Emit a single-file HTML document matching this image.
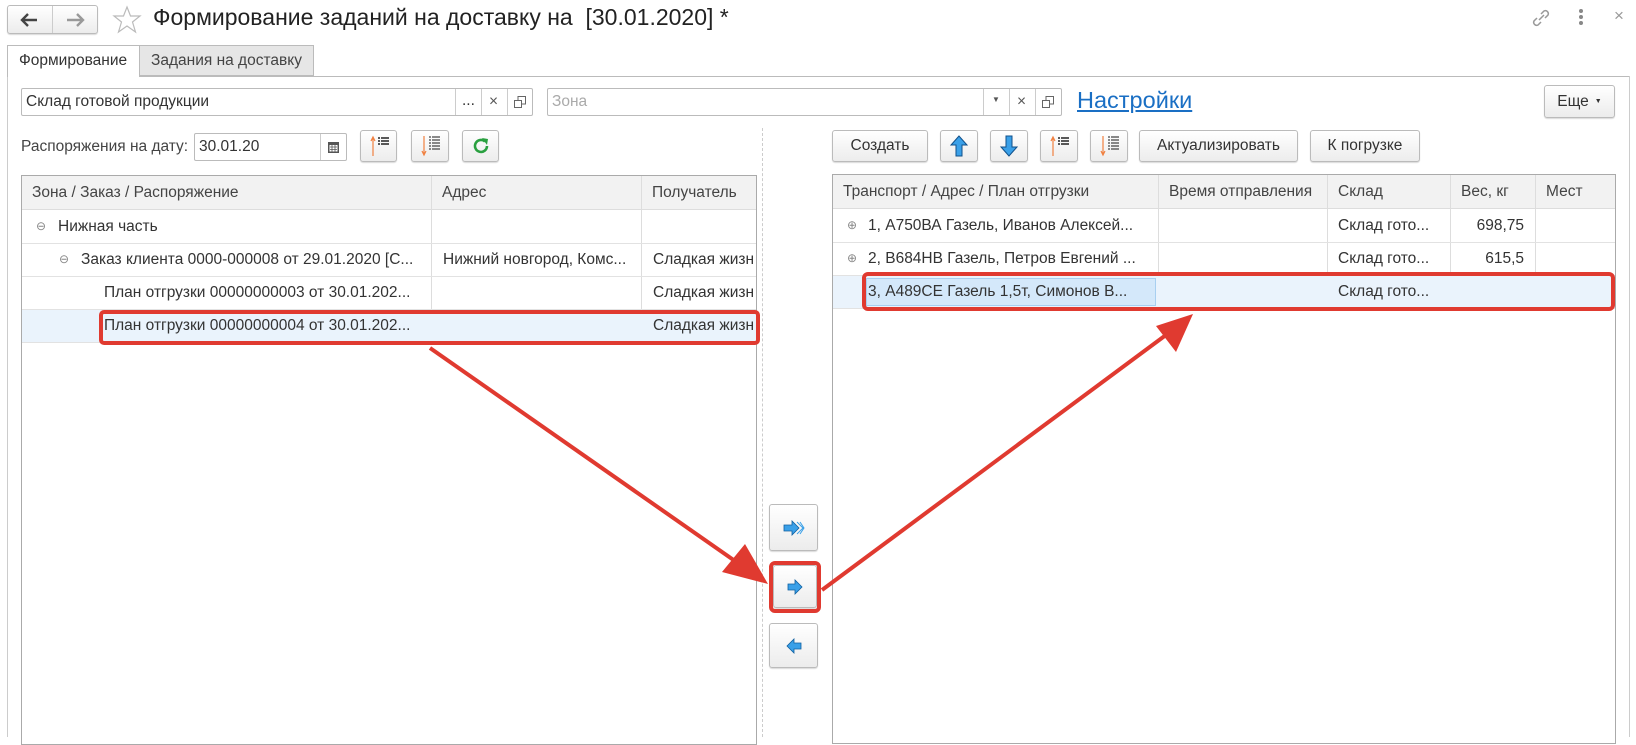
<!DOCTYPE html>
<html><head><meta charset="utf-8">
<style>
*{box-sizing:border-box;margin:0;padding:0}
body{width:1636px;height:737px;background:#fff;font-family:"Liberation Sans",sans-serif;font-size:15.5px;color:#333;position:relative;overflow:hidden}
.a{position:absolute}
.btn{position:absolute;border:1px solid #bbb;border-radius:3px;background:linear-gradient(#fff,#ececec);box-shadow:0 1px 1px rgba(0,0,0,.15);display:flex;align-items:center;justify-content:center;color:#333;font-size:15.5px}
.fld{position:absolute;border:1px solid #bbb;border-radius:2px;background:#fff}
.cell{position:absolute;white-space:nowrap;overflow:hidden;line-height:33px;height:33px}
.hl{position:absolute;height:1px;background:#e2e2e2}
.vl{position:absolute;width:1px;background:#ddd}
</style></head><body>
<!-- nav -->
<div class="btn" style="left:7px;top:5px;width:91px;height:29px;border-radius:3px"></div>
<div class="a" style="left:52px;top:6px;width:1px;height:27px;background:#ccc"></div>
<svg class="a" style="left:20px;top:12px" width="20" height="16"><path d="M2 8h15M8 2L2 8l6 6" stroke="#444" stroke-width="2.4" fill="none"/></svg>
<svg class="a" style="left:65px;top:12px" width="20" height="16"><path d="M2 8h15M12 2l6 6-6 6" stroke="#999" stroke-width="2.4" fill="none"/></svg>
<svg class="a" style="left:112px;top:5px" width="30" height="29"><polygon points="15,2 18.5,11 28,11 20.5,17 23.5,27 15,21 6.5,27 9.5,17 2,11 11.5,11" fill="none" stroke="#bbb" stroke-width="1.2"/></svg>
<div class="a" style="left:153px;top:4px;font-size:23px;color:#222;white-space:nowrap">Формирование заданий на доставку на&nbsp; [30.01.2020] *</div>
<svg class="a" style="left:1530px;top:7px" width="22" height="22"><path d="M9 13l5-5M7 11l-3 3a3 3 0 004 4l3-3M15 11l3-3a3 3 0 00-4-4l-3 3" stroke="#999" stroke-width="1.5" fill="none"/></svg>
<div class="a" style="left:1579px;top:9px;width:4px;height:4px;border-radius:2px;background:#888;box-shadow:0 6px 0 #888,0 12px 0 #888"></div>
<div class="a" style="left:1614px;top:6px;font-size:17px;color:#999">×</div>
<!-- tabs -->
<div class="a" style="left:7px;top:76px;width:1622px;height:1px;background:#bbb"></div>
<div class="a" style="left:1629px;top:76px;width:1px;height:661px;background:#ccc"></div>
<div class="a" style="left:7px;top:76px;width:1px;height:661px;background:#ccc"></div>
<div class="a" style="left:7px;top:45px;width:133px;height:32px;border:1px solid #bbb;border-bottom:none;background:#fff;line-height:30px;padding-left:11px;color:#333">Формирование</div>
<div class="a" style="left:139px;top:45px;width:175px;height:31px;border:1px solid #bbb;background:#e6e6e6;line-height:29px;padding-left:11px;color:#444">Задания на доставку</div>
<!-- fields -->
<div class="fld" style="left:21px;top:88px;width:512px;height:28px"></div>
<div class="a" style="left:26px;top:93px">Склад готовой продукции</div>
<div class="vl" style="left:455px;top:89px;height:26px;background:#ccc"></div>
<div class="vl" style="left:481px;top:89px;height:26px;background:#ccc"></div>
<div class="vl" style="left:507px;top:89px;height:26px;background:#ccc"></div>
<div class="a" style="left:462px;top:92px">...</div>
<div class="a" style="left:489px;top:93px;color:#555">×</div>
<svg class="a" style="left:513px;top:95px" width="14" height="14"><rect x="1.5" y="5.5" width="7" height="7" fill="none" stroke="#666"/><path d="M5 5V1.5h7.5V9H9" fill="none" stroke="#666"/></svg>
<div class="fld" style="left:547px;top:88px;width:515px;height:28px"></div>
<div class="a" style="left:552px;top:93px;color:#aaa">Зона</div>
<div class="vl" style="left:983px;top:89px;height:26px;background:#ccc"></div>
<div class="vl" style="left:1009px;top:89px;height:26px;background:#ccc"></div>
<div class="vl" style="left:1035px;top:89px;height:26px;background:#ccc"></div>
<div class="a" style="left:992px;top:95px;font-size:8px;color:#555">▼</div>
<div class="a" style="left:1017px;top:93px;color:#555">×</div>
<svg class="a" style="left:1041px;top:95px" width="14" height="14"><rect x="1.5" y="5.5" width="7" height="7" fill="none" stroke="#666"/><path d="M5 5V1.5h7.5V9H9" fill="none" stroke="#666"/></svg>
<div class="a" style="left:1077px;top:87px;font-size:23.5px;color:#1a6fc4;text-decoration:underline">Настройки</div>
<div class="btn" style="left:1544px;top:85px;width:71px;height:33px">Еще <span style="font-size:7px;margin-left:6px">▼</span></div>
<!-- left toolbar -->
<div class="a" style="left:21px;top:138px;color:#444;white-space:nowrap">Распоряжения на дату:</div>
<div class="fld" style="left:194px;top:133px;width:153px;height:28px"></div>
<div class="a" style="left:199px;top:138px">30.01.20</div>
<div class="vl" style="left:320px;top:134px;height:26px;background:#ccc"></div>
<svg class="a" style="left:327px;top:140px" width="13" height="14"><rect x="1" y="2" width="11" height="11" fill="#555"/><rect x="2.5" y="5" width="8" height="6.5" fill="#fff"/><path d="M3 7h7M3 9.5h7M5 5v7M8 5v7" stroke="#555" stroke-width=".8"/></svg>
<div class="btn" style="left:360px;top:130px;width:37px;height:32px"><svg width="24" height="24"><path d="M6 22V4M4 7l2-4 2 4" stroke="#f08040" stroke-width="1.2" fill="none"/><path d="M11 4h2M14 4h8M11 7h2M14 7h8M11 10h2M14 10h8" stroke="#222" stroke-width="1.5"/></svg></div>
<div class="btn" style="left:411px;top:130px;width:38px;height:32px"><svg width="24" height="24"><path d="M6 2v18M4 17l2 4 2-4" stroke="#f08040" stroke-width="1.2" fill="none"/><path d="M11 3h2M14 3h8M11 6h2M14 6h8M11 9h2M14 9h8M11 12h2M14 12h8M11 15h2M14 15h8" stroke="#444" stroke-width="1.2"/></svg></div>
<div class="btn" style="left:462px;top:130px;width:37px;height:32px"><svg width="20" height="20"><path d="M16 10a6 6 0 11-2-4.5" stroke="#2aa040" stroke-width="2.6" fill="none"/><path d="M11 2l6 1-1 6z" fill="#2aa040"/></svg></div>
<!-- separator -->
<div class="a" style="left:762px;top:128px;width:0;height:609px;border-left:1px dashed #ccc"></div>
<!-- left table -->
<div class="a" style="left:21px;top:175px;width:736px;height:570px;border:1px solid #aaa"></div>
<div class="a" style="left:22px;top:176px;width:734px;height:34px;background:#f2f2f2;border-bottom:1px solid #ddd"></div>
<div class="vl" style="left:431px;top:176px;height:166px"></div>
<div class="vl" style="left:641px;top:176px;height:166px"></div>
<div class="cell" style="left:32px;top:176px;color:#444">Зона / Заказ / Распоряжение</div>
<div class="cell" style="left:442px;top:176px;color:#444">Адрес</div>
<div class="cell" style="left:652px;top:176px;color:#444">Получатель</div>
<div class="hl" style="left:22px;top:243px;width:734px"></div>
<div class="hl" style="left:22px;top:276px;width:734px"></div>
<div class="hl" style="left:22px;top:309px;width:734px"></div>
<div class="a" style="left:22px;top:310px;width:734px;height:32px;background:#eaf3fc"></div>
<div class="hl" style="left:22px;top:342px;width:734px"></div>
<div class="cell" style="left:36px;top:210px;color:#888;font-size:12px">⊖</div>
<div class="cell" style="left:58px;top:210px">Нижная часть</div>
<div class="cell" style="left:59px;top:243px;color:#888;font-size:12px">⊖</div>
<div class="cell" style="left:81px;top:243px;width:345px">Заказ клиента 0000-000008 от 29.01.2020 [С...</div>
<div class="cell" style="left:443px;top:243px;width:194px">Нижний новгород, Комс...</div>
<div class="cell" style="left:653px;top:243px;width:102px">Сладкая жизнь</div>
<div class="cell" style="left:104px;top:276px;width:325px">План отгрузки 00000000003 от 30.01.202...</div>
<div class="cell" style="left:653px;top:276px;width:102px">Сладкая жизнь</div>
<div class="cell" style="left:104px;top:309px;width:325px">План отгрузки 00000000004 от 30.01.202...</div>
<div class="cell" style="left:653px;top:309px;width:102px">Сладкая жизнь</div>
<div class="a" style="left:99px;top:310px;width:661px;height:35px;border:4px solid #e03a30;border-radius:5px"></div>
<!-- middle buttons -->
<div class="btn" style="left:769px;top:504px;width:49px;height:47px"><svg width="22" height="16"><path d="M1 5h8V1l7 7-7 7v-4H1z" fill="#3aa0e8" stroke="#1060a0" stroke-width=".8"/><path d="M14 2l6 6-6 6M17 2l4 6-4 6" stroke="#3aa0e8" stroke-width="1" fill="none"/></svg></div>
<div class="btn" style="left:773px;top:565px;width:44px;height:43px"><svg width="16" height="16"><path d="M1 5h7V1l7 7-7 7v-4H1z" fill="#3aa0e8" stroke="#1060a0" stroke-width=".8"/></svg></div>
<div class="a" style="left:769px;top:561px;width:52px;height:52px;border:4px solid #e03a30;border-radius:6px"></div>
<div class="btn" style="left:769px;top:623px;width:49px;height:45px"><svg width="16" height="16"><path d="M15 5H8V1L1 8l7 7v-4h7z" fill="#3aa0e8" stroke="#1060a0" stroke-width=".8"/></svg></div>
<!-- right toolbar -->
<div class="btn" style="left:832px;top:130px;width:96px;height:32px">Создать</div>
<div class="btn" style="left:940px;top:130px;width:38px;height:32px"><svg width="18" height="22"><path d="M9 1L1 10h5v11h6V10h5z" fill="#3aa0e8" stroke="#10508a" stroke-width="1"/></svg></div>
<div class="btn" style="left:990px;top:130px;width:38px;height:32px"><svg width="18" height="22"><path d="M9 21L1 12h5V1h6v11h5z" fill="#3aa0e8" stroke="#10508a" stroke-width="1"/></svg></div>
<div class="btn" style="left:1040px;top:130px;width:38px;height:32px"><svg width="24" height="24"><path d="M6 22V4M4 7l2-4 2 4" stroke="#f08040" stroke-width="1.2" fill="none"/><path d="M11 4h2M14 4h8M11 7h2M14 7h8M11 10h2M14 10h8" stroke="#222" stroke-width="1.5"/></svg></div>
<div class="btn" style="left:1090px;top:130px;width:38px;height:32px"><svg width="24" height="24"><path d="M6 2v18M4 17l2 4 2-4" stroke="#f08040" stroke-width="1.2" fill="none"/><path d="M11 3h2M14 3h8M11 6h2M14 6h8M11 9h2M14 9h8M11 12h2M14 12h8M11 15h2M14 15h8" stroke="#444" stroke-width="1.2"/></svg></div>
<div class="btn" style="left:1139px;top:130px;width:159px;height:32px">Актуализировать</div>
<div class="btn" style="left:1310px;top:130px;width:110px;height:32px">К погрузке</div>
<!-- right table -->
<div class="a" style="left:832px;top:174px;width:784px;height:570px;border:1px solid #aaa"></div>
<div class="a" style="left:833px;top:175px;width:782px;height:34px;background:#f2f2f2;border-bottom:1px solid #ddd"></div>
<div class="vl" style="left:1158px;top:175px;height:133px"></div>
<div class="vl" style="left:1327px;top:175px;height:133px"></div>
<div class="vl" style="left:1450px;top:175px;height:133px"></div>
<div class="vl" style="left:1535px;top:175px;height:133px"></div>
<div class="cell" style="left:843px;top:175px;color:#444">Транспорт / Адрес / План отгрузки</div>
<div class="cell" style="left:1169px;top:175px;color:#444;width:156px">Время отправления</div>
<div class="cell" style="left:1338px;top:175px;color:#444">Склад</div>
<div class="cell" style="left:1461px;top:175px;color:#444">Вес, кг</div>
<div class="cell" style="left:1546px;top:175px;color:#444">Мест</div>
<div class="hl" style="left:833px;top:242px;width:782px"></div>
<div class="hl" style="left:833px;top:275px;width:782px"></div>
<div class="a" style="left:833px;top:276px;width:782px;height:32px;background:#eaf3fc"></div>
<div class="a" style="left:866px;top:278px;width:290px;height:28px;background:#d4e8fa;border:1px solid #a8cff0"></div>
<div class="hl" style="left:833px;top:308px;width:782px"></div>
<div class="cell" style="left:847px;top:209px;color:#888;font-size:12px">⊕</div>
<div class="cell" style="left:868px;top:209px;width:288px">1, А750ВА Газель, Иванов Алексей...</div>
<div class="cell" style="left:1338px;top:209px">Склад гото...</div>
<div class="cell" style="left:1464px;top:209px;width:60px;text-align:right">698,75</div>
<div class="cell" style="left:847px;top:242px;color:#888;font-size:12px">⊕</div>
<div class="cell" style="left:868px;top:242px;width:288px">2, В684НВ Газель, Петров Евгений ...</div>
<div class="cell" style="left:1338px;top:242px">Склад гото...</div>
<div class="cell" style="left:1464px;top:242px;width:60px;text-align:right">615,5</div>
<div class="cell" style="left:868px;top:275px;width:288px">3, А489СЕ Газель 1,5т, Симонов В...</div>
<div class="cell" style="left:1338px;top:275px">Склад гото...</div>
<div class="a" style="left:862px;top:272px;width:753px;height:39px;border:4px solid #e03a30;border-radius:6px"></div>
<!-- arrows -->
<svg class="a" style="left:0;top:0" width="1636" height="737">
<line x1="430" y1="348" x2="745" y2="568" stroke="#e03a30" stroke-width="4"/>
<polygon points="768,584 722,572 745,544" fill="#e03a30"/>
<line x1="822" y1="590" x2="1170" y2="332" stroke="#e03a30" stroke-width="4"/>
<polygon points="1193,314 1176,352 1156,326" fill="#e03a30"/>
</svg>
</body></html>
